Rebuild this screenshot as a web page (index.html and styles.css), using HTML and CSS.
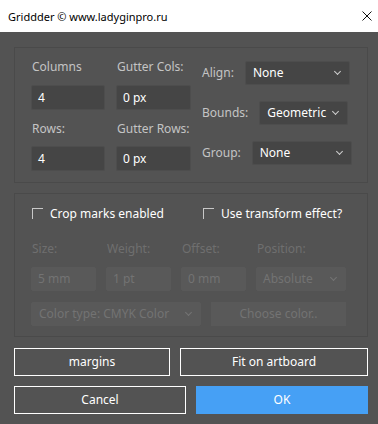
FILE: index.html
```html
<html>
	<head>
		<link rel="stylesheet" href="styles.css">
	</head>
	<body>
		<div class="titlebar">
			<span class="title">Griddder © www.ladyginpro.ru</span>
			<svg class="close" width="10" height="10" viewBox="0 0 10 10">
				<path d="M0.5 0.5 L9.5 9.5 M9.5 0.5 L0.5 9.5" stroke="#111" stroke-width="1" fill="none" />
			</svg>
		</div>

		<div class="dialog">
			<div class="panel grid-panel">
				<div class="cells">
					<div class="lbl">Columns</div>
					<div class="lbl">Gutter Cols:</div>
					<div class="inp">4</div>
					<div class="inp">0 px</div>
					<div class="lbl row2">Rows:</div>
					<div class="lbl row2">Gutter Rows:</div>
					<div class="inp">4</div>
					<div class="inp">0 px</div>
				</div>
				<div class="opts">
					<div class="opt">
						<span class="lbl">Align:</span>
						<div class="sel w-align">None<i class="chev"></i></div>
					</div>
					<div class="opt">
						<span class="lbl">Bounds:</span>
						<div class="sel w-bounds">Geometric<i class="chev"></i></div>
					</div>
					<div class="opt">
						<span class="lbl">Group:</span>
						<div class="sel w-group">None<i class="chev"></i></div>
					</div>
				</div>
			</div>

			<div class="panel marks">
				<div class="checks">
					<label class="chk chk-crop"><span class="box"></span>Crop marks enabled</label>
					<label class="chk"><span class="box"></span>Use transform effect?</label>
				</div>
				<div class="dis-labels">
					<span class="w-size">Size:</span>
					<span class="w-size">Weight:</span>
					<span class="w-size">Offset:</span>
					<span>Position:</span>
				</div>
				<div class="dis-row">
					<div class="inp off w-size">5 mm</div>
					<div class="inp off w-size">1 pt</div>
					<div class="inp off w-size">0 mm</div>
					<div class="sel off w-pos">Absolute<i class="chev"></i></div>
				</div>
				<div class="dis-row">
					<div class="sel off w-color">Color type: CMYK Color<i class="chev"></i></div>
					<div class="btn-off">Choose color..</div>
				</div>
			</div>

			<div class="btns">
				<div class="btn w-margins">margins</div>
				<div class="btn w-fit">Fit on artboard</div>
			</div>
			<div class="btns">
				<div class="btn w-half">Cancel</div>
				<div class="btn ok w-half">OK</div>
			</div>
		</div>
	</body>
</html>
```

FILE: styles.css
```css
body,
html {
	margin: 0;
	padding: 0;
	background-color: #535353;
	font-family: "Noto Sans", "Open Sans", sans-serif;
	font-size: 12px;
}

.titlebar {
	display: flex;
	align-items: center;
	justify-content: space-between;
	height: 32px;
	background-color: #ffffff;
	padding: 0 6px 0 8px;
	box-sizing: border-box;
}

.title {
	color: #000;
	font-size: 11px;
}

.dialog {
	padding: 15px 10px 0 14px;
}

.panel {
	width: 354px;
	box-sizing: border-box;
	border: 1px solid #4a4a4a;
}

.grid-panel {
	display: flex;
	height: 136px;
	padding: 9px 0 0 16px;
}

.cells {
	display: grid;
	grid-template-columns: 74px 75px;
	column-gap: 11px;
	align-content: start;
}

.lbl {
	color: #c4c4c4;
	line-height: 20px;
	height: 20px;
	margin-left: 1px;
	margin-bottom: 8px;
}

.row2 {
	margin-top: 9px;
	margin-bottom: 7px;
}

.inp {
	height: 25px;
	box-sizing: border-box;
	background-color: #454545;
	border: 1px solid #4d4d4d;
	border-radius: 2px;
	color: #ffffff;
	line-height: 23px;
	padding-left: 6px;
}

.opts {
	display: flex;
	flex-direction: column;
	gap: 16px;
	margin: 4px 0 0 11px;
}

.opt {
	display: flex;
	align-items: center;
	gap: 11px;
	height: 24px;
}

.opt .lbl {
	margin: 0;
}

.sel {
	position: relative;
	height: 24px;
	box-sizing: border-box;
	background-color: #454545;
	border: 1px solid #4d4d4d;
	border-radius: 2px;
	color: #ffffff;
	line-height: 22px;
	padding-left: 7px;
}

.chev {
	position: absolute;
	right: 9px;
	top: 7px;
	width: 4px;
	height: 4px;
	border-right: 1px solid #cfcfcf;
	border-bottom: 1px solid #cfcfcf;
	transform: rotate(45deg);
}

.w-align {
	width: 105px;
}

.w-bounds {
	width: 89px;
}

.w-group {
	width: 100px;
}

.marks {
	margin-top: 10px;
	height: 144px;
	padding: 10px 0 0 16px;
}

.checks {
	display: flex;
	height: 18px;
	align-items: center;
}

.chk {
	display: flex;
	align-items: center;
	color: #ffffff;
}

.chk-crop {
	width: 171px;
	margin-left: 1px;
}

.box {
	display: inline-block;
	width: 10px;
	height: 10px;
	border-top: 1px solid #c8c8c8;
	border-left: 1px solid #c8c8c8;
	margin-right: 7px;
}

.dis-labels {
	display: flex;
	gap: 10px;
	color: #6f6f6f;
	line-height: 20px;
	margin: 17px 0 8px 1px;
}

.dis-row {
	display: flex;
	gap: 10px;
	margin-bottom: 11px;
}

.inp.off,
.sel.off {
	background-color: #595959;
	border-color: #595959;
	color: #737373;
	height: 24px;
	line-height: 22px;
}

.sel.off .chev {
	border-color: #747474;
}

.w-size {
	width: 65px;
}

.w-pos {
	width: 90px;
	padding-left: 6px;
}

.w-color {
	width: 170px;
}

.btn-off {
	width: 135px;
	height: 24px;
	background-color: #595959;
	color: #737373;
	text-align: center;
	line-height: 24px;
}

.btns {
	display: flex;
	gap: 10px;
	margin-top: 11px;
}

.btns + .btns {
	margin-top: 10px;
}

.btn {
	height: 28px;
	box-sizing: border-box;
	border: 1px solid #ffffff;
	color: #ffffff;
	text-align: center;
	line-height: 26px;
	font-size: 12px;
}

.ok {
	background-color: #46a0f5;
	border-color: #46a0f5;
}

.w-margins {
	width: 156px;
}

.w-fit {
	width: 188px;
}

.w-half {
	width: 172px;
}
```
